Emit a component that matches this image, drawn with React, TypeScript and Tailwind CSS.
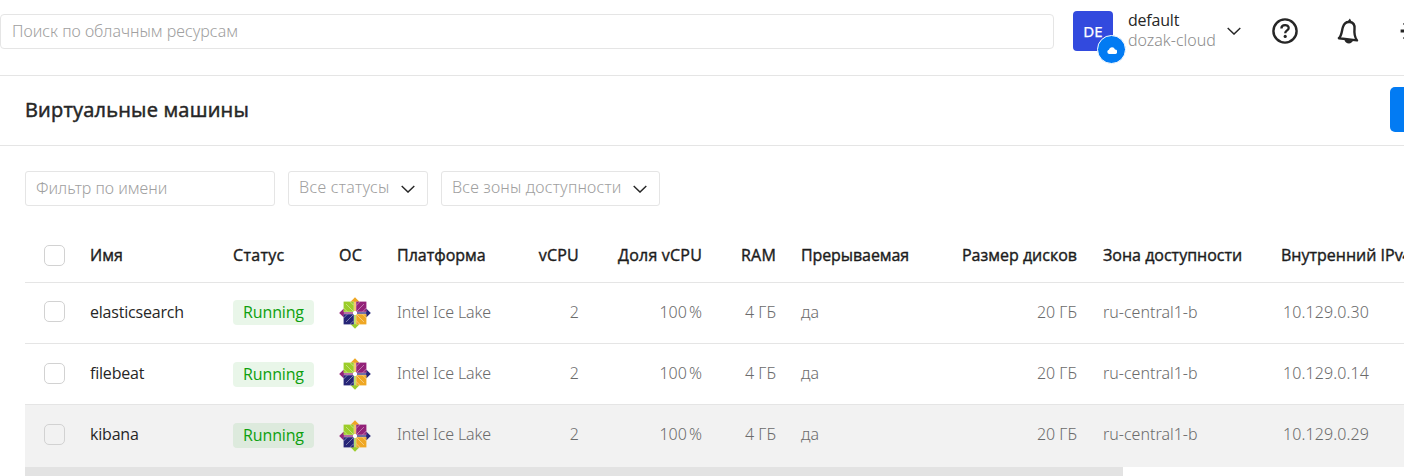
const machines = [
  { name: "elasticsearch", ip: "10.129.0.30", height: "h-[61px] pb-[2px]", badge: "mt-0", logo: "mt-[2px]", check: "-mt-[2px]", hovered: false },
  { name: "filebeat", ip: "10.129.0.14", height: "h-[61px] pb-[2px]", badge: "mt-[2px]", logo: "mt-[2px]", check: "mt-0", hovered: false },
  { name: "kibana", ip: "10.129.0.29", height: "h-[62px] pb-[4px]", badge: "mt-[2px]", logo: "mt-[4px]", check: "mt-0", hovered: true },
];

const columns =
  "grid grid-cols-[65px_143px_107px_57px_100px_82px_123px_74px_160px_142px_203px_200px] items-center whitespace-nowrap";

function ChevronDown({ className }: { className: string }) {
  return (
    <svg viewBox="0 0 14 8" className={className} fill="none" stroke="#262626" strokeWidth="1.4">
      <path d="M.7 .9 7 7.1 13.3 .9" />
    </svg>
  );
}

function CentosLogo({ className }: { className: string }) {
  return (
    <svg viewBox="0 0 32 32" className={`-ml-px h-8 w-8 ${className}`}>
      <path d="M16 .2 20.4 4.8H11.6Z" fill="#efa724" />
      <path d="M31.8 16 27.2 20.4V11.6Z" fill="#262577" />
      <path d="M16 31.8 11.6 27.2H20.4Z" fill="#9ccd2a" />
      <path d="M.2 16 4.8 11.6V20.4Z" fill="#932279" />
      <path d="M4.6 4.6H14.8V14.8H4.6Z" fill="#9ccd2a" />
      <path d="M17.2 4.6H27.4V14.8H17.2Z" fill="#932279" />
      <path d="M17.2 17.2H27.4V27.4H17.2Z" fill="#efa724" />
      <path d="M4.6 17.2H14.8V27.4H4.6Z" fill="#262577" />
      <path
        d="M7 7 14 14M18 14 25 7M7 25 14 18M18 18 25 25M11 4.6 14.6 8.2M21 4.6 17.4 8.2M11 27.4 14.6 23.8M21 27.4 17.4 23.8M4.6 11 8.2 14.6M4.6 21 8.2 17.4M27.4 11 23.8 14.6M27.4 21 23.8 17.4"
        stroke="#fff"
        strokeOpacity=".5"
        strokeWidth=".8"
      />
      <path d="M16 3V14" stroke="#efa724" strokeWidth="1.3" />
      <path d="M18 16H29" stroke="#262577" strokeWidth="1.3" />
      <path d="M16 18V29" stroke="#9ccd2a" strokeWidth="1.3" />
      <path d="M3 16H14" stroke="#932279" strokeWidth="1.3" />
      <circle cx="16" cy="16" r="2.1" fill="#fff" />
    </svg>
  );
}

function Checkbox({ className = "" }: { className?: string }) {
  return <span className={`ml-[19px] block h-[21px] w-[21px] rounded-[5px] border border-[#d2d2d2] ${className}`} />;
}

export default function App() {
  return (
    <div className="h-[476px] w-[1404px] overflow-hidden bg-white font-['Noto_Sans','Liberation_Sans',sans-serif] text-[16px] leading-5 text-[#262626]">
      <header className="flex h-[76px] items-start border-b border-[#e5e5e5]">
        <div className="mt-3.5 flex h-[35px] w-[1054px] shrink-0 items-center rounded border border-[#e5e5e5] pb-[2px] pl-[11px] font-light text-[#a0a0a0]">
          Поиск по облачным ресурсам
        </div>
        <div className="relative mt-[11px] ml-[19px] flex h-10 w-10 shrink-0 items-center justify-center rounded bg-[#324ade] text-[15px] text-white [-webkit-text-stroke:0.25px_#fff]">
          DE
          <span className="absolute top-[24px] left-[24px] flex h-[29px] w-[29px] items-center justify-center rounded-full border-[1.5px] border-white bg-[#027bf3]">
            <svg viewBox="0 0 10 8" className="h-2 w-2.5" fill="#fff">
              <path d="M2.3 8A2.2 2.2 0 0 1 1.9 3.7 3.2 3.2 0 0 1 8 3.4 2.3 2.3 0 0 1 7.7 8Z" />
            </svg>
          </span>
        </div>
        <div className="mt-2.5 ml-[15px] w-[99px] shrink-0">
          <div className="font-['Open_Sans','Noto_Sans',sans-serif] tracking-[-0.2px]">default</div>
          <div className="font-light text-[#8c8c8c]">dozak-cloud</div>
        </div>
        <ChevronDown className="mt-[27px] h-2 w-3.5 shrink-0" />
        <svg viewBox="0 0 26 26" className="mt-[18px] ml-[31px] h-[26px] w-[26px] shrink-0" fill="none" stroke="#262626">
          <circle cx="13" cy="13" r="11.6" strokeWidth="2.4" />
          <path d="M9.4 10.4C9.4 6 16.7 6 16.7 10 16.7 12.5 13.2 12.3 13.2 15.3" strokeWidth="2.3" />
          <circle cx="13.2" cy="18.4" r="1.6" fill="#262626" stroke="none" />
        </svg>
        <svg viewBox="0 0 22 26" className="mt-[18px] ml-[39px] h-[26px] w-[22px] shrink-0" fill="none" stroke="#262626">
          <path
            d="M1.9 20.2C4.9 17.4 4.6 12.8 6 8.8 7.2 5.2 9.8 3.6 12.8 4 16.4 4.5 17.9 7.4 17.5 11 17.1 15 17.3 18.6 20 22.4Z"
            strokeWidth="2.4"
            strokeLinejoin="round"
          />
          <path d="M10.6 3.4 12.9 .4 14.8 4ZM7.4 21.5 16 22.6C15 26.6 8 26.4 7.4 21.5Z" fill="#262626" stroke="none" />
        </svg>
        <svg viewBox="0 0 5 22" className="mt-5 ml-[41px] h-[22px] w-[5px] shrink-0" fill="none" stroke="#262626">
          <path d="M.6 11H5" strokeWidth="3" />
          <path d="M3.4 3.4 5 5M3.4 18.6 5 17" strokeWidth="1.4" />
        </svg>
      </header>

      <div className="flex h-[70px] items-center justify-between border-b border-[#e5e5e5] pb-[2px] pl-[25px]">
        <h1 className="font-['Open_Sans','Noto_Sans',sans-serif] text-[20px] leading-7 font-medium tracking-[0.2px] [-webkit-text-stroke:0.5px_#262626]">
          Виртуальные машины
        </h1>
        <div className="h-[45px] w-3.5 rounded-l-[5px] bg-[#027bf3]" />
      </div>

      <div className="flex pt-[25px] pl-[25px] font-light text-[#a0a0a0]">
        <div className="flex h-[35px] w-[250px] items-center rounded-[3px] border border-[#e5e5e5] pb-[2px] pl-2.5">
          Фильтр по имени
        </div>
        <div className="ml-[13px] flex h-[35px] w-[140px] items-center justify-between rounded-[3px] border border-[#e5e5e5] pr-3 pb-[3px] pl-2.5 tracking-[0.3px]">
          Все статусы
          <ChevronDown className="mt-1 h-2 w-3.5" />
        </div>
        <div className="ml-[13px] flex h-[35px] w-[219px] items-center justify-between rounded-[3px] border border-[#e5e5e5] pr-3 pb-[3px] pl-2.5 tracking-[0.18px]">
          Все зоны доступности
          <ChevronDown className="mt-1 h-2 w-3.5" />
        </div>
      </div>

      <div className="mt-[22px] ml-[25px]">
        <div
          className={`${columns} h-[55px] border-b border-[#e5e5e5] font-['Open_Sans','Noto_Sans',sans-serif] font-medium text-[#1c1c1c] [-webkit-text-stroke:0.4px_#1c1c1c]`}
        >
          <Checkbox />
          <span>Имя</span>
          <span className="tracking-[0.3px]">Статус</span>
          <span className="-ml-px tracking-[0.2px]">ОС</span>
          <span>Платформа</span>
          <span className="text-right tracking-[0.2px]">vCPU</span>
          <span className="text-right tracking-[0.2px]">Доля vCPU</span>
          <span className="text-right tracking-[0.2px]">RAM</span>
          <span className="pl-[25px] tracking-[-0.1px]">Прерываемая</span>
          <span className="pr-px text-right">Размер дисков</span>
          <span className="pl-[25px]">Зона доступности</span>
          <span>Внутренний IPv4</span>
        </div>
        {machines.map((m) => (
          <div
            key={m.name}
            className={`${columns} ${m.height} font-light text-[#6b6b6b] ${m.hovered ? "bg-[#f2f2f2]" : "border-b border-[#e5e5e5]"}`}
          >
            <Checkbox className={m.check} />
            <span className="font-['Open_Sans','Noto_Sans',sans-serif] font-normal tracking-[-0.2px] text-[#262626]">
              {m.name}
            </span>
            <span
              className={`flex h-[25px] w-[81px] items-center justify-center rounded bg-[#0ea00e]/9 font-['Open_Sans','Noto_Sans',sans-serif] font-normal tracking-[-0.15px] text-[#0ea00e] ${m.badge}`}
            >
              Running
            </span>
            <CentosLogo className={m.logo} />
            <span className="tracking-[-0.13px]">Intel Ice Lake</span>
            <span className="text-right">2</span>
            <span className="text-right [word-spacing:-2px]">100 %</span>
            <span className="text-right">4 ГБ</span>
            <span className="pl-[25px]">да</span>
            <span className="pr-px text-right">20 ГБ</span>
            <span className="pl-[25px]">ru-central1-b</span>
            <span className="pl-0.5 tracking-[0.1px]">{m.ip}</span>
          </div>
        ))}
        <div className="h-[9px] w-[1098px] bg-[#e3e3e3]" />
      </div>
    </div>
  );
}
